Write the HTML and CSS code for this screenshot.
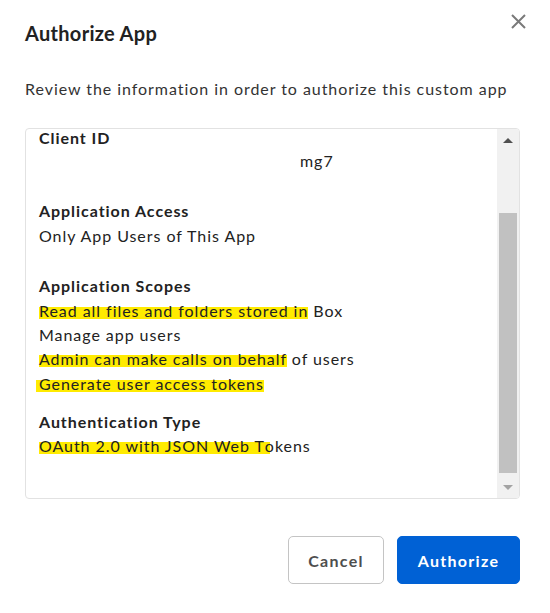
FILE: index.html
```html
<!DOCTYPE html>
<html>
<head>
<meta charset="utf-8">
<link rel="stylesheet" href="styles.css">
</head>
<body>
<div class="dialog">
  <div class="header">
    <h1 class="title">Authorize App</h1>
    <button class="close" aria-label="Close">
      <svg width="15" height="15" viewBox="0 0 15 15"><path d="M1 1 L14 14 M14 1 L1 14" stroke="#7a7a7a" stroke-width="2" fill="none"/></svg>
    </button>
  </div>
  <p class="subtitle">Review the information in order to authorize this custom app</p>
  <div class="box">
    <div class="viewport">
      <div class="content">
        <div class="section s1">
          <div class="label first">Client ID</div>
          <div class="value id">mg7</div>
        </div>
        <div class="section s2">
          <div class="label">Application Access</div>
          <div class="value">Only App Users of This App</div>
        </div>
        <div class="section s3">
          <div class="label">Application Scopes</div>
          <div class="value"><mark class="hl">Read all files and folders stored in</mark> Box</div>
          <div class="value">Manage app users</div>
          <div class="value"><mark class="hl">Admin can make calls on behalf</mark> of users</div>
          <div class="value"><mark class="hl hl-left">Generate user access tokens</mark></div>
        </div>
        <div class="section">
          <div class="label">Authentication Type</div>
          <div class="value"><mark class="hl hl-ext">OAuth 2.0 with JSON Web T</mark>okens</div>
        </div>
      </div>
    </div>
    <div class="scrollbar">
      <div class="sb-btn"><span class="arrow-up"></span></div>
      <div class="sb-track"><div class="sb-thumb"></div></div>
      <div class="sb-btn"><span class="arrow-down"></span></div>
    </div>
  </div>
  <div class="footer">
    <button class="btn btn-cancel">Cancel</button>
    <button class="btn btn-primary">Authorize</button>
  </div>
</div>
</body>
</html>
```

FILE: styles.css
```css
* { box-sizing: border-box; }
html, body { margin: 0; padding: 0; background: #fff; }
body {
  font-family: Lato, "Noto Sans", sans-serif;
  color: #222;
  font-size: 16px;
  letter-spacing: 0.95px;
}
.dialog {
  width: 550px;
  padding: 0 30px 0 25px;
}
.header {
  display: flex;
  justify-content: space-between;
  align-items: flex-start;
  padding-top: 14px;
}
.title {
  margin: 7px 0 0 0;
  font-size: 20px;
  line-height: 24px;
  font-weight: 700;
  letter-spacing: 0.3px;
  color: #222;
}
.close {
  border: 0;
  background: none;
  padding: 0;
  margin-right: -6px;
  width: 15px;
  height: 15px;
  display: block;
}
.close svg { display: block; }
.subtitle {
  margin: 32px 0 0 0;
  line-height: 24px;
  font-size: 16px;
  color: #333;
}
.box {
  margin-top: 27px;
  height: 371px;
  border: 1px solid #e2e2e2;
  border-radius: 4px;
  display: flex;
  overflow: hidden;
}
.viewport {
  flex: 1;
  overflow: hidden;
  padding-left: 13px;
}
.section { line-height: 24.4px; }
.s1 { margin-bottom: 26px; }
.s2 { margin-bottom: 26px; }
.s3 { margin-bottom: 13.5px; }
.label { font-weight: 700; }
.label.first { line-height: 18px; }
.value { font-weight: 400; }
.id { padding-left: 261px; margin-top: 2px; }
.hl {
  color: inherit;
  background: linear-gradient(to bottom, transparent 32%, #ffeb00 32%, #ffeb00 94%, transparent 94%);
}
.hl-left { margin-left: -3px; padding-left: 3px; }
.hl-ext { padding-right: 5px; margin-right: -5px; }
.scrollbar {
  width: 22px;
  background: #f1f1f1;
  display: flex;
  flex-direction: column;
}
.sb-btn {
  height: 22px;
  display: flex;
  align-items: center;
  justify-content: center;
}
.arrow-up {
  width: 0; height: 0;
  border-left: 5px solid transparent;
  border-right: 5px solid transparent;
  border-bottom: 5px solid #505050;
}
.arrow-down {
  width: 0; height: 0;
  border-left: 5px solid transparent;
  border-right: 5px solid transparent;
  border-top: 5px solid #a3a3a3;
}
.sb-track {
  flex: 1;
  padding: 62px 2px 0 2px;
}
.sb-thumb {
  height: 260px;
  background: #c1c1c1;
}
.footer {
  display: flex;
  justify-content: flex-end;
  gap: 13px;
  margin-top: 37px;
}
.btn {
  height: 48px;
  border-radius: 5px;
  font-family: Lato, "Noto Sans", sans-serif;
  font-size: 16px;
  font-weight: 700;
  letter-spacing: 1.3px;
  padding: 0;
}
.btn-cancel {
  width: 96px;
  background: #fff;
  border: 1px solid #c4c4c4;
  color: #4e4e4e;
}
.btn-primary {
  width: 123px;
  background: #0061d5;
  border: 1px solid #0061d5;
  color: #fff;
}
```
